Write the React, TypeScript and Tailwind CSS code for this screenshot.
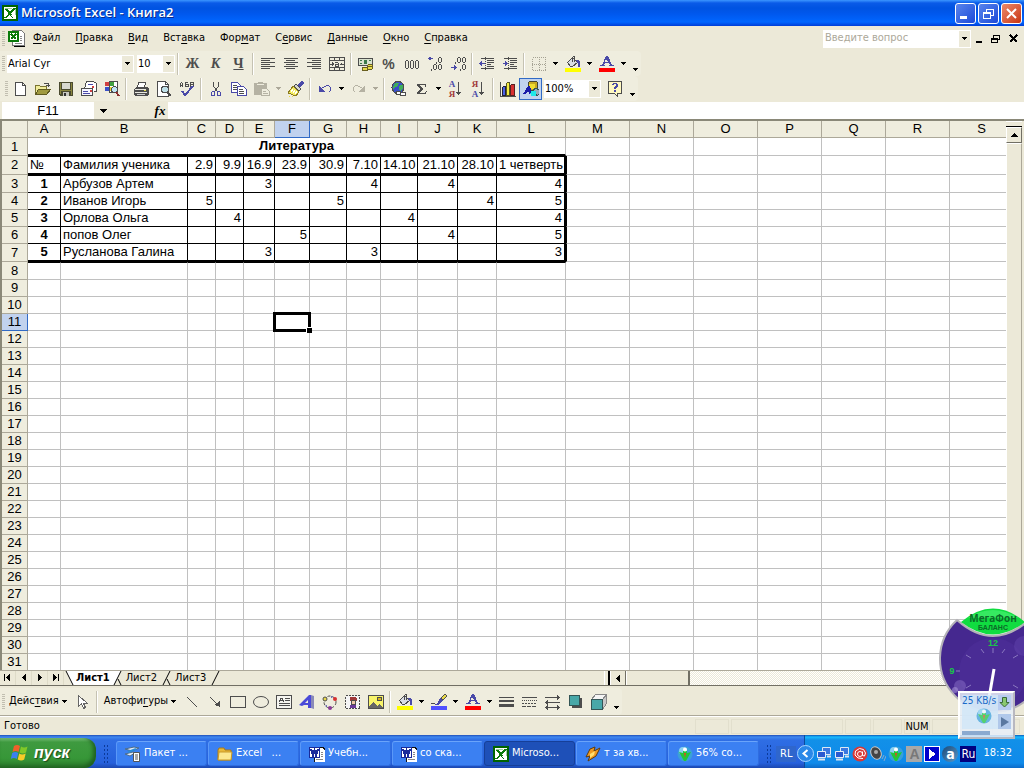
import { Fragment, type ReactNode } from "react";

const INK = "#4d4d4d";
const BLUE = "#4a4aa8";

/* ---------- icons ---------- */

const Pic = ({ children, w = 16, h = 16, smooth = false }: { children: ReactNode; w?: number; h?: number; smooth?: boolean }) => (
  <svg width={w} height={h} viewBox={`0 0 ${w} ${h}`} fill="none" shapeRendering={smooth ? "auto" : "crispEdges"} className="shrink-0" aria-hidden="true">
    {children}
  </svg>
);

const ExcelIcon = () => (
  <Pic>
    <path d="M0 0h16v16H0z" fill="#006400" />
    <path d="M2 2h12v12H2z" fill="#fff" />
    <path d="M3 3h7v1H3zM11 4h3v6h-1V5h-2z" fill="#9fd09f" />
    <path d="M3 4h3l2 3 3-4h3l-5 5 4 5h-3l-3-3-3 3H2l4-5z" fill="#0a7a0a" />
    <path d="M9 10l4 3M3 12l3-3" stroke="#fff" />
  </Pic>
);

const ExcelDocIcon = () => (
  <Pic w={17} h={17}>
    <path d="M5 1h9l3 3v13H6z" fill="#000" />
    <path d="M4 0h9l3 3v12H4z" fill="#fff" stroke="#777" />
    <path d="M12 6h2M12 8h2M12 10h2M7 13h7" stroke="#888" />
    <path d="M0 1h11v11H0z" fill="#0a7a0a" />
    <path d="M2 3h7v7H2z" fill="#fff" />
    <path d="M3 4l5 5M8 4L3 9" stroke="#0a7a0a" strokeWidth="2" />
  </Pic>
);

const AlignIcon = ({ mode }: { mode: "left" | "center" | "right" }) => (
  <Pic>
    {[2, 4, 6, 8, 10, 12].map((y, i) => {
      const w = i % 2 ? 9 : 14;
      const x = mode === "left" ? 1 : mode === "right" ? 15 - w : 1 + Math.floor((14 - w) / 2);
      return <rect key={y} x={x} y={y} width={w} height="1" fill={INK} />;
    })}
  </Pic>
);

const MergeIcon = () => (
  <Pic>
    <path d="M.5 1.500h15v13H.5zM.5 4.500h15M.5 11.500h15M5.500 1v3M10.500 1v3M5.500 12v3M10.500 12v3M1 8h4M11 8h4" stroke={INK} />
    <path d="M3 6v4l2-2zM13 6v4l-2-2z" fill={INK} />
    <path d="M6 6h3v1h1v4H6V8h3V7H6z" fill={INK} />
    <path d="M7 9h2v1H7z" fill="#efedde" />
  </Pic>
);

const MoneyIcon = () => (
  <Pic>
    <path d="M.5 2.500h14v7H.5z" fill="#d9e2cf" stroke={INK} />
    <path d="M2 4h2v1H2zM11 4h2v1h-2zM2 7h2v1H2zM6 4h3v4H6z" fill="#3c7a4a" />
    <ellipse cx="12" cy="10" rx="2.500" ry="1.500" fill="#e6dc4a" stroke="#6a6020" />
    <ellipse cx="12" cy="12" rx="2.500" ry="1.500" fill="#e6dc4a" stroke="#6a6020" />
    <ellipse cx="7" cy="13" rx="3" ry="1.500" fill="#e6dc4a" stroke="#6a6020" />
  </Pic>
);

const Zero = ({ x, y, h }: { x: number; y: number; h: number }) => (
  <path d={`M${x + 1} ${y}h2v1h-2zM${x + 1} ${y + h - 1}h2v1h-2zM${x} ${y + 1}h1v${h - 2}h-1zM${x + 3} ${y + 1}h1v${h - 2}h-1z`} fill={INK} />
);

const ThousandsIcon = () => (
  <Pic>
    <Zero x={1} y={4} h={9} />
    <Zero x={6} y={4} h={9} />
    <Zero x={11} y={4} h={9} />
  </Pic>
);

const MoreDecimalsIcon = () => (
  <Pic>
    <path d="M3 1h1v1h2v1H4v1H3V3H1V2h2z" fill={BLUE} />
    <path d="M1 2h1v1H1zM2 1h1v3H2z" fill={BLUE} />
    <Zero x={11} y={1} h={6} />
    <Zero x={6} y={8} h={6} />
    <Zero x={11} y={8} h={6} />
    <path d="M9 6h1v2H9zM4 13h1v2H4z" fill={INK} />
  </Pic>
);

const LessDecimalsIcon = () => (
  <Pic>
    <path d="M1 11h3v1H1zM4 9h1v5H4zM5 10h1v3H5zM6 11h1v1H6z" fill={BLUE} />
    <Zero x={7} y={1} h={6} />
    <Zero x={12} y={1} h={6} />
    <Zero x={12} y={8} h={6} />
    <path d="M5 6h1v2H5zM10 13h1v2h-1z" fill={INK} />
  </Pic>
);

const IndentIcon = ({ flip = false }: { flip?: boolean }) => (
  <Pic>
    <path d="M2 2.500h13M8 4.500h7M8 6.500h7M8 8.500h4M8 10.500h7M2 12.500h13" stroke={INK} />
    <path d={flip ? "M1 7h2v1H1zM3 5h1v5H3zM4 6h1v3H4zM5 7h1v1H5z" : "M3 7h3v1H3zM2 5h1v5H2zM1 6h1v3H1zM0 7h1v1H0z"} fill={BLUE} />
    <path d="M6.500 1v14" stroke={INK} strokeDasharray="1 1" />
  </Pic>
);

const BordersIcon = () => (
  <Pic>
    <path d="M1.500 1.500h13v13h-13zM8.500 1v14M1 8.500h14" stroke="#a5a293" strokeDasharray="1 1" />
  </Pic>
);

const BucketIcon = () => (
  <Pic>
    <path d="M2.500 6.500l5-5 5 5-5 4h-2z" fill="#d8dce4" stroke={INK} />
    <path d="M7.500 6V1.500l1-1h1v5" stroke={INK} />
    <path d="M11 4h3l1 2v5h-2V8z" fill={BLUE} />
    <path d="M0 12h16v4H0z" fill="#ff0" />
  </Pic>
);

const LetterColorIcon = () => (
  <Pic>
    <path d="M7 0h2l4 9h2v1h-5V9h1l-1-2H6L5 9h1v1H1V9h2zM7 3L6 6h3z" fill={BLUE} fillRule="evenodd" />
    <path d="M0 12h16v4H0z" fill="#f00" />
  </Pic>
);

const PenColorIcon = () => (
  <Pic>
    <path d="M14 0l2 2-4 4-2-2z" fill="#e8d84a" stroke={INK} />
    <path d="M9 4l3 3-5 4H4l-1-1h3z" fill={BLUE} />
    <path d="M0 9.500h4" stroke={INK} />
    <path d="M0 12h16v4H0z" fill="#5050ff" />
  </Pic>
);

const NewIcon = () => (
  <Pic>
    <path d="M3.500 1.500h7l3 3v10h-10z" fill="#fff" stroke={INK} />
    <path d="M10.500 1.500v3h3" stroke={INK} />
  </Pic>
);

const OpenIcon = () => (
  <Pic>
    <path d="M.5 13.500v-9h4l1 1h6v3" fill="#f0ec9a" stroke="#7a7430" />
    <path d="M.5 13.500l3-5h12l-4 5z" fill="#a09a40" stroke="#5f5a20" />
    <path d="M9 2.500h4v2M11 4.500h4M13 5.500h1" stroke={INK} />
  </Pic>
);

const SaveIcon = () => (
  <Pic>
    <path d="M1 1h14v14H2l-1-1z" fill="#4a4a30" />
    <path d="M2 2h1v11H2zM13 2h1v12h-1z" fill="#8a8640" />
    <path d="M4 2h8v6H4z" fill="#d8d8d0" />
    <path d="M3 9h10v1H3z" fill="#8a8640" />
    <path d="M5 11h6v4H5z" fill="#c8c8c0" />
    <path d="M6 12h2v3H6z" fill="#333" />
  </Pic>
);

const MailIcon = () => (
  <Pic>
    <path d="M3.500 8l2-7.500h7l3 2v8h-3" fill="#fff" stroke={INK} />
    <path d="M.5 7.500h11v7H.5z" fill="#f5f5ff" stroke={INK} />
    <path d="M2 10.500h5M2 12.500h7M7 3.500h5" stroke={BLUE} />
    <path d="M9 9h2v2H9zM11 5h2v2h-2z" fill="#d04040" />
  </Pic>
);

const FindFileIcon = () => (
  <Pic>
    <path d="M5.500.5h8v11h-8z" fill="#fff" stroke={INK} />
    <path d="M1 1h4v4H1z" fill="#d04040" />
    <path d="M6 1h4v4H6z" fill="#40a040" />
    <path d="M1 6h4v4H1z" fill="#3a50c8" />
    <path d="M6 6h3v4H6z" fill="#e8d030" />
    <circle cx="10.500" cy="8.500" r="3" fill="#bfe4f4" stroke={INK} />
    <path d="M12 11l3 4" stroke="#8a3030" strokeWidth="2" />
  </Pic>
);

const PrintIcon = () => (
  <Pic>
    <path d="M4.500 6.500l1-5h7l-1 5" fill="#fff" stroke={INK} />
    <path d="M1 8l2-2h11l2 2v5l-2 2H2l-1-2z" fill={INK} />
    <path d="M2 8h11v1H2zM2 11h12v1H2z" fill="#e8e8e0" />
    <path d="M11 9h2v1h-2z" fill="#e6dc4a" />
    <path d="M4 13h8v1H4z" fill="#ccc" />
  </Pic>
);

const PreviewIcon = () => (
  <Pic>
    <path d="M1.500.5h8l3 3v12h-11z" fill="#fff" stroke={INK} />
    <path d="M9.500.5v3h3" stroke={INK} />
    <circle cx="9" cy="8.500" r="3.500" fill="#bfe0e8" stroke={INK} />
    <path d="M11 11l4 4" stroke={INK} strokeWidth="2" />
  </Pic>
);

const SpellIcon = () => (
  <Pic>
    <path d="M1.500 6V2.500l1-1 1 1V6M1.500 4.500h2M6.500 1v5M6 1.500h3M6 3.500h3v2H6M11.500 1v5M11 1.500h3v2h-3M11 5.500h3v-2" stroke={INK} />
    <path d="M3 10l3 4 8-9" stroke={BLUE} strokeWidth="2" />
  </Pic>
);

const CutIcon = () => (
  <Pic>
    <path d="M5.500 1v4l4 6M10.500 1v4l-4 6" stroke={INK} />
    <path d="M4.500 10.500h2v4h-3v-3zM9.500 10.500h2l1 1v3h-3z" stroke={BLUE} />
  </Pic>
);

const CopyIcon = () => (
  <Pic>
    <path d="M.5 1.500h6l3 3v7h-9z" fill="#fff" stroke={BLUE} />
    <path d="M2 4.500h4M2 6.500h4M2 8.500h4" stroke={INK} />
    <path d="M6.500 5.500h6l3 3v6h-9z" fill="#fff" stroke={BLUE} />
    <path d="M8 8.500h4M8 10.500h5M8 12.500h5" stroke={INK} />
  </Pic>
);

const PasteIcon = () => (
  <Pic>
    <path d="M0 2h4V1h5v1h4v5H7v7H0z" fill="#b5b2a3" />
    <path d="M3 3h7v1H3z" fill="#efedde" />
    <path d="M7.500 7.500h5l3 3v4h-8z" fill="#efedde" stroke="#b5b2a3" />
    <path d="M9 10.500h3M9 12.500h5" stroke="#b5b2a3" />
  </Pic>
);

const BrushIcon = () => (
  <Pic>
    <path d="M14 0l2 2-4 5-3-3z" fill={BLUE} />
    <path d="M8 3l5 5-2 2-5-5z" fill="#d8d8d0" stroke={INK} />
    <path d="M5 5l6 6-3 4-8-3z" fill="#f4ec60" stroke="#8a7a20" />
    <path d="M3 11l2-3M5 12l2-3M7 13l2-3" stroke="#fff" />
    <path d="M1 15h1M4 15h1" stroke="#e8d84a" />
  </Pic>
);

const UndoIcon = ({ redo = false }: { redo?: boolean }) => (
  <Pic>
    <g transform={redo ? "translate(16 0) scale(-1 1)" : undefined} fill={redo ? "#b5b2a3" : BLUE}>
      <path d="M2 5h1v1h1v1h1v1h1v1h1v1h1v1H2z" />
      <path d="M5 6h2v1H5zM7 5h2v1H7zM9 4h3v1H9zM12 5h1v1h-1zM13 6h1v4h-1zM12 10h1v1h-1z" />
    </g>
  </Pic>
);

const GlobeLinkIcon = () => (
  <Pic>
    <circle cx="7" cy="6.500" r="6" fill="#3a50c8" stroke={INK} />
    <path d="M4 2h4l-1 3-3 1-1 3-1-3zM9 4h3v4l-3 2-1-3z" fill="#3fae5a" />
    <path d="M5.500 10.500h4v3h-4zM9.500 11.500h5v3h-5z" fill="#fff" stroke={INK} />
  </Pic>
);

const SortIcon = ({ top, bottom }: { top: string; bottom: string }) => (
  <span className="flex items-center">
    <span className="flex flex-col font-['Liberation_Serif',serif] text-[9px] leading-[10px] font-bold">
      <span className={top === "А" ? "text-[#4a4aa8]" : "text-[#a03838]"}>{top}</span>
      <span className={bottom === "А" ? "text-[#4a4aa8]" : "text-[#a03838]"}>{bottom}</span>
    </span>
    <Pic w={7}>
      <path d="M3 1h1v13H3zM1 11h5v1H1zM2 12h3v1H2z" fill={INK} />
    </Pic>
  </span>
);

const ChartIcon = () => (
  <Pic>
    <path d="M.5 1v14H16" stroke={INK} />
    <path d="M2.500 6.500l1-1h2v9h-3z" fill="#4a60e8" stroke="#223" />
    <path d="M6.500 2.500l1-1h2v13h-3z" fill="#f4ec40" stroke="#552" />
    <path d="M10.500 4.500l1-1h3v11h-4z" fill="#d83030" stroke="#522" />
  </Pic>
);

const DrawingIcon = () => (
  <Pic>
    <path d="M5.500 1.500l1-1h7l1 1v6l-2 2h-7z" fill="#c8a820" stroke="#443" />
    <path d="M6 3h6v5H6z" fill="#f0dc30" />
    <path d="M0 13L5 5h2l2 8H6v-2H4l-2 2z" fill="#1a1aa8" />
    <path d="M10 9l3-2 3 2v4l-2 2z" fill="#9ab" stroke="#355" />
    <circle cx="10.500" cy="12.500" r="3" fill="#20e8e8" />
  </Pic>
);

const HelpIcon = () => (
  <Pic>
    <path d="M1.500.5h13v12h-4v3l-3-3h-6z" fill="#fff8c0" stroke={INK} />
    <path d="M5 4V3h1V2h4v1h1v3h-1v1H9v1H7V6h1V5h1V3H7v1zM7 9h2v2H7z" fill={BLUE} />
  </Pic>
);

const PointerIcon = () => (
  <Pic>
    <path d="M4.500 1.500v11l3-3 2 5 2-1-2-4h4z" fill="#fff" stroke="#666" />
  </Pic>
);

const TextBoxIcon = () => (
  <Pic>
    <path d="M.5 1.500h15v13H.5z" fill="#f5f5f0" stroke={INK} />
    <path d="M3 8l2-4h1l2 4M4 6.500h3M9 4.500h5M9 6.500h5M3 9.500h11M3 11.500h11" stroke={INK} />
  </Pic>
);

const WordArtIcon = () => (
  <Pic smooth>
    <path d="M0 11L10 1h2v13H9v-3H5l-2 1z" fill="#4a4ad8" />
    <path d="M6 9l3-3v3z" fill="#efedde" />
    <path d="M12 1l3 1v13l-3-1z" fill="#8a8ab8" />
  </Pic>
);

const DiagramIcon = () => (
  <Pic smooth>
    <circle cx="8" cy="8" r="6" stroke={INK} strokeDasharray="3 2" />
    <circle cx="3" cy="5" r="2" fill="#e8d84a" stroke={INK} />
    <circle cx="13" cy="5" r="2" fill="#d83030" />
    <circle cx="8" cy="14" r="2" fill="#8a3a98" />
    <path d="M3 12l2-1v2z" fill={BLUE} />
    <path d="M9 2l2 1-2 1z" fill={BLUE} />
  </Pic>
);

const ClipArtIcon = () => (
  <Pic>
    <path d="M.5 1.500h14v13H.5z" fill="#f5f5f5" stroke={INK} strokeDasharray="2 1" />
    <path d="M5 3h5l2 2v2H5z" fill="#a03838" />
    <path d="M6 6h4v4H6z" fill="#f0c8a8" stroke={INK} />
    <path d="M5 11h6v3H5z" fill="#6a3a98" />
  </Pic>
);

const PhotoIcon = () => (
  <Pic>
    <path d="M.5 1.500h15v13H.5z" fill="#f8f46a" stroke={INK} />
    <circle cx="11.500" cy="5" r="2" fill="#d8b820" stroke={INK} />
    <path d="M1 14v-2l4-4 4 4 2-2 4 3v1z" fill="#666" />
  </Pic>
);

const LineWeightIcon = () => (
  <Pic>
    <path d="M0 3h15v1H0zM0 6h15v2H0zM0 10h15v3H0z" fill={INK} />
  </Pic>
);

const DashIcon = () => (
  <Pic>
    <path d="M0 3.500h15" stroke={INK} />
    <path d="M0 6.500h15" stroke={INK} strokeDasharray="1 1" />
    <path d="M0 9.500h15" stroke={INK} strokeDasharray="2 1" />
    <path d="M0 12.500h15" stroke={INK} strokeDasharray="4 1" />
  </Pic>
);

const ArrowStyleIcon = () => (
  <Pic>
    <path d="M0 3h15v1H0zM12 1h1v5h-1zM13 2h1v3h-1zM0 8h15v1H0zM2 6h1v5H2zM1 7h1v3H1zM0 13h15v1H0zM2 11h1v5H2zM1 12h1v3H1zM12 11h1v5h-1zM13 12h1v3h-1z" fill={INK} />
  </Pic>
);

const ShadowIcon = () => (
  <Pic>
    <path d="M4 4h10v10H4z" fill={INK} />
    <path d="M1.500 1.500h10v10h-10z" fill="#48a8a8" stroke="#355" />
  </Pic>
);

const CubeIcon = () => (
  <Pic>
    <path d="M.5 5.500l4-5h11l-4 5z" fill="#f4f4f4" stroke="#888" />
    <path d="M11.500 5.500l4-5v9l-4 6z" fill="#c8c8c8" stroke="#888" />
    <path d="M.5 5.500h11v10H.5z" fill="#48a8a8" stroke="#355" />
  </Pic>
);

const WordIcon = () => (
  <Pic>
    <path d="M5 1h9l2 3v12H5z" fill="#fff" stroke="#111" />
    <path d="M12 6h2M12 8h2M12 10h2M7 13h7" stroke="#888" />
    <path d="M0 1h11v11H0z" fill="#1a2a9a" />
    <path d="M1 2h9v9H1z" fill="#fff" />
    <path d="M2 3l2 6 1.500-5L7 9l2-6" stroke="#1a2a9a" strokeWidth="2" />
  </Pic>
);

const FolderIcon = () => (
  <Pic smooth>
    <path d="M1 4l1-2h5l1 2h6v10H1z" fill="#e8b838" stroke="#a87818" />
    <path d="M1 14l1-8h13l-1 8z" fill="#fce890" stroke="#c89828" />
  </Pic>
);

const PackIcon = () => (
  <Pic smooth>
    <path d="M0 3l9-2 5 1-7 3zM0 8l8-2 2 1-5 3z" fill="#e4ecf4" stroke="#4a6a8a" />
    <path d="M3 6l8-3" stroke="#2a8ad8" strokeWidth="2" />
    <path d="M8.500 6.500h6v9h-6z" fill="#fff" stroke="#555" />
    <path d="M10 9h3M10 11h3M10 13h3" stroke="#555" />
  </Pic>
);

const BoltIcon = () => (
  <Pic smooth>
    <path d="M1 11L5 3l5-2-1 4 6-3-4 8-8 5 2-5z" fill="#f09a20" stroke="#5a3a10" />
    <path d="M5 8l5-3-1 4-4 3z" fill="#ffe070" />
  </Pic>
);

const DownloaderIcon = () => (
  <Pic smooth>
    <circle cx="8" cy="8" r="7.500" fill="#3aa0d8" />
    <circle cx="6" cy="5" r="4" fill="#8ad0f0" />
    <path d="M2 6l4 1V5h4v2l4-1-5 9H7z" fill="#20c838" />
    <circle cx="8" cy="3.500" r="2" fill="#fff" />
    <path d="M7 7h2l-1 5z" fill="#e84020" />
  </Pic>
);

const NetworkIcon = () => (
  <Pic smooth>
    <path d="M6.500 1.500h8v7h-8z" fill="#3a78e0" stroke="#dde8f4" />
    <path d="M1.500 5.500h8v6h-8z" fill="#2a5ad0" stroke="#e4eef8" />
    <path d="M2 13.500h7M11 10.500h4" stroke="#dde4ee" strokeWidth="2" />
  </Pic>
);

const AgentIcon = () => (
  <Pic smooth>
    <circle cx="8" cy="8" r="7.500" fill="#d83838" />
    <circle cx="8" cy="8" r="2.500" stroke="#fff" />
    <path d="M10.500 5.500v4l2 .5 1-3-2-3.500-4-1-4 2.500-.5 4 3 3 5 .5" stroke="#fff" />
  </Pic>
);

const VolumeIcon = () => (
  <Pic smooth>
    <ellipse cx="6" cy="7" rx="5" ry="6.500" transform="rotate(-25 6 7)" fill="#444" stroke="#ccc" />
    <circle cx="6" cy="6" r="2" fill="#aaa" />
    <path d="M12 13l2-4M14 15l2-5" stroke="#8ac" />
  </Pic>
);

const LetterTrayIcon = () => (
  <span className="flex h-4 w-4 items-center justify-center bg-[#a8a8a8] font-['Liberation_Sans',sans-serif] text-sm leading-4 font-bold text-[#787878]">A</span>
);

const PlayTrayIcon = () => (
  <Pic>
    <path d="M0 0h16v16H0z" fill="#fff" />
    <path d="M1 1h14v14H1z" fill="#00c" />
    <path d="M5 3l7 5-7 5z" fill="#fff" />
  </Pic>
);

const WindowsFlag = () => (
  <svg width="20" height="20" viewBox="0 0 20 20" aria-hidden="true">
    <path d="M4 3q3-2 6 0L8.500 9q-3-2-6 0z" fill="#f0602a" />
    <path d="M11 3.500q3 2 6.500 0L16 9.500q-3 2-6.500 0z" fill="#80c828" />
    <path d="M2.200 10q3-2 6 0L6.800 16q-3-2-6 0z" fill="#3a80f0" />
    <path d="M9.200 10.500q3 2 6.500 0l-1.500 6q-3 2-6.500 0z" fill="#f8cc28" />
  </svg>
);

/* ---------- small building blocks ---------- */

const Caret = ({ faded = false }: { faded?: boolean }) => (
  <Pic w={5} h={3}>
    <path d="M0 0h5v1H4v1H3v1H2V2H1V1H0z" fill={faded ? "#aca899" : "#000"} />
  </Pic>
);

const ToolButton = ({ label, pressed = false, children }: { label: string; pressed?: boolean; children: ReactNode }) => (
  <button
    type="button"
    aria-label={label}
    title={label}
    className={`flex h-[22px] w-[23px] shrink-0 items-center justify-center ${pressed ? "border border-[#316ac5] bg-[#c1d2ee]" : ""}`}
  >
    {children}
  </button>
);

const ArrowButton = ({ label, faded }: { label: string; faded?: boolean }) => (
  <button type="button" aria-label={label} className="flex h-[22px] w-[11px] shrink-0 items-center justify-center">
    <Caret faded={faded} />
  </button>
);

const MoreButton = () => (
  <button type="button" aria-label="Параметры панелей" className="flex h-[22px] w-3 shrink-0 items-end justify-center pb-1">
    <Caret />
  </button>
);

const Sep = () => <span className="mx-[2px] h-[22px] w-[2px] shrink-0 border-r border-white bg-[#c5c2b2]" />;

const Grip = () => (
  <span className="h-4 w-[3px] shrink-0 bg-[repeating-linear-gradient(#c1beb0_0_1px,transparent_1px_2px)]" />
);

const Accel = ({ text, at }: { text: string; at: number }) => (
  <>
    {text.slice(0, at)}
    <span className="underline underline-offset-2">{text[at]}</span>
    {text.slice(at + 1)}
  </>
);

const Combo = ({ label, value, width }: { label: string; value: string; width: string }) => (
  <label className={`flex h-[18px] shrink-0 items-center border border-white bg-white ${width}`}>
    <select aria-label={label} className="h-4 min-w-0 flex-1 appearance-none bg-white leading-4 outline-none">
      <option>{value}</option>
    </select>
    <span className="flex h-4 w-[11px] items-center justify-center bg-[#ece9d8]">
      <Caret />
    </span>
  </label>
);

/* ---------- window chrome ---------- */

const TitleBar = () => (
  <header className="flex h-[26px] shrink-0 items-center bg-[linear-gradient(#3c96ff_0,#0a5be8_3px,#0053e1_8px,#0058ee_14px,#0066ff_22px,#003dd7_26px)] pr-[2px] pl-[2px]">
    <ExcelIcon />
    <h1 className="flex-1 pl-[3px] font-['Open_Sans','Trebuchet_MS',sans-serif] text-[13px] font-semibold text-white [text-shadow:1px_1px_0_#0a2a88]">
      Microsoft Excel - Книга2
    </h1>
    <div className="flex gap-[2px]">
      <button type="button" aria-label="Свернуть" className="h-[21px] w-[21px] rounded-[3px] border border-white bg-linear-to-br from-[#5a84ec] to-[#1c48d8]">
        <Pic w={19} h={19}>
          <path d="M4 12h7v3H4z" fill="#fff" />
        </Pic>
      </button>
      <button type="button" aria-label="Восстановить" className="h-[21px] w-[21px] rounded-[3px] border border-white bg-linear-to-br from-[#5a84ec] to-[#1c48d8]">
        <Pic w={19} h={19}>
          <path d="M7.500 8V5.500h7v6H12M7 5h8M4.500 8.500h7v6h-7zM4 9h8" stroke="#fff" />
        </Pic>
      </button>
      <button type="button" aria-label="Закрыть" className="h-[21px] w-[21px] rounded-[3px] border border-white bg-linear-to-br from-[#ec8868] to-[#c83208]">
        <Pic w={19} h={19} smooth>
          <path d="M5 5l9 9M14 5l-9 9" stroke="#fff" strokeWidth="2" />
        </Pic>
      </button>
    </div>
  </header>
);

const menuItems = [
  { text: "Файл", at: 0 },
  { text: "Правка", at: 0 },
  { text: "Вид", at: 0 },
  { text: "Вставка", at: 3 },
  { text: "Формат", at: 3 },
  { text: "Сервис", at: 1 },
  { text: "Данные", at: 0 },
  { text: "Окно", at: 0 },
  { text: "Справка", at: 0 },
];

const MenuBar = () => (
  <nav className="flex h-[25px] shrink-0 items-center pl-[2px]">
    <Grip />
    <span className="ml-[3px]">
      <ExcelDocIcon />
    </span>
    {menuItems.map((item) => (
      <button key={item.text} type="button" className="pr-[7px] pl-2">
        <Accel {...item} />
      </button>
    ))}
    <div className="ml-auto flex h-[18px] w-[148px] items-center bg-white pr-px">
      <input aria-label="Введите вопрос" placeholder="Введите вопрос" className="min-w-0 flex-1 bg-white pl-[2px] outline-none placeholder:text-[#aca899]" />
      <button type="button" aria-label="Список вопросов" className="flex h-4 w-[11px] items-center justify-center bg-[#ece9d8]">
        <Caret />
      </button>
    </div>
    <div className="flex items-center gap-[5px] pr-1">
      <button type="button" aria-label="Свернуть книгу">
        <Pic w={13} h={12}>
          <path d="M5 8h6v2H5z" fill="#000" />
        </Pic>
      </button>
      <button type="button" aria-label="Восстановить книгу">
        <Pic w={13} h={12}>
          <path d="M4.500 5V2.500h6v4H9M4 2h7M2.500 5.500h6v4h-6zM2 6h7" stroke="#000" />
        </Pic>
      </button>
      <button type="button" aria-label="Закрыть книгу">
        <Pic w={13} h={12}>
          <path d="M3 2l7 7M10 2L3 9" stroke="#000" strokeWidth="2" />
        </Pic>
      </button>
    </div>
  </nav>
);

const FormatBar = () => (
  <div role="toolbar" aria-label="Форматирование" className="flex h-[25px] w-fit shrink-0 items-center rounded-r-sm bg-[#efedde] pl-[2px]">
    <Grip />
    <span className="ml-[2px] mr-[3px]">
      <Combo label="Шрифт" value="Arial Cyr" width="w-[127px]" />
    </span>
    <Combo label="Размер" value="10" width="w-[38px]" />
    <Sep />
    <ToolButton label="Полужирный">
      <b className="font-['Liberation_Serif',serif] text-sm text-[#4d4d4d]">Ж</b>
    </ToolButton>
    <ToolButton label="Курсив">
      <b className="font-['Liberation_Serif',serif] text-sm text-[#4d4d4d] italic">К</b>
    </ToolButton>
    <ToolButton label="Подчеркнутый">
      <b className="font-['Liberation_Serif',serif] text-sm text-[#4d4d4d] underline">Ч</b>
    </ToolButton>
    <Sep />
    <ToolButton label="По левому краю"><AlignIcon mode="left" /></ToolButton>
    <ToolButton label="По центру"><AlignIcon mode="center" /></ToolButton>
    <ToolButton label="По правому краю"><AlignIcon mode="right" /></ToolButton>
    <ToolButton label="Объединить и поместить в центре"><MergeIcon /></ToolButton>
    <Sep />
    <ToolButton label="Денежный формат"><MoneyIcon /></ToolButton>
    <ToolButton label="Процентный формат">
      <b className="font-['Liberation_Sans',sans-serif] text-sm text-[#4d4d4d]">%</b>
    </ToolButton>
    <ToolButton label="Формат с разделителями"><ThousandsIcon /></ToolButton>
    <ToolButton label="Увеличить разрядность"><MoreDecimalsIcon /></ToolButton>
    <ToolButton label="Уменьшить разрядность"><LessDecimalsIcon /></ToolButton>
    <Sep />
    <ToolButton label="Уменьшить отступ"><IndentIcon /></ToolButton>
    <ToolButton label="Увеличить отступ"><IndentIcon flip /></ToolButton>
    <Sep />
    <ToolButton label="Границы"><BordersIcon /></ToolButton>
    <ArrowButton label="Выбор границ" />
    <ToolButton label="Цвет заливки"><BucketIcon /></ToolButton>
    <ArrowButton label="Выбор цвета заливки" />
    <ToolButton label="Цвет шрифта"><LetterColorIcon /></ToolButton>
    <ArrowButton label="Выбор цвета шрифта" />
    <MoreButton />
  </div>
);

const StandardBar = () => (
  <div role="toolbar" aria-label="Стандартная" className="flex h-[25px] w-fit shrink-0 items-center rounded-r-sm bg-[#efedde] pl-[5px]">
    <Grip />
    <ToolButton label="Создать"><NewIcon /></ToolButton>
    <ToolButton label="Открыть"><OpenIcon /></ToolButton>
    <ToolButton label="Сохранить"><SaveIcon /></ToolButton>
    <ToolButton label="Сообщение"><MailIcon /></ToolButton>
    <ToolButton label="Найти"><FindFileIcon /></ToolButton>
    <Sep />
    <ToolButton label="Печать"><PrintIcon /></ToolButton>
    <ToolButton label="Предварительный просмотр"><PreviewIcon /></ToolButton>
    <ToolButton label="Орфография"><SpellIcon /></ToolButton>
    <Sep />
    <ToolButton label="Вырезать"><CutIcon /></ToolButton>
    <ToolButton label="Копировать"><CopyIcon /></ToolButton>
    <ToolButton label="Вставить"><PasteIcon /></ToolButton>
    <ArrowButton label="Варианты вставки" faded />
    <ToolButton label="Формат по образцу"><BrushIcon /></ToolButton>
    <Sep />
    <ToolButton label="Отменить"><UndoIcon /></ToolButton>
    <ArrowButton label="Список отмены" />
    <ToolButton label="Вернуть"><UndoIcon redo /></ToolButton>
    <ArrowButton label="Список возврата" faded />
    <Sep />
    <ToolButton label="Гиперссылка"><GlobeLinkIcon /></ToolButton>
    <ToolButton label="Автосумма">
      <Pic>
        <path d="M3 3h9v3h-1V5l-1-1H6l3 4-3 4h5l1-2h1l-1 3H3v-1l3-4-3-4z" fill={INK} />
      </Pic>
    </ToolButton>
    <ArrowButton label="Функции" />
    <ToolButton label="По возрастанию"><SortIcon top="А" bottom="Я" /></ToolButton>
    <ToolButton label="По убыванию"><SortIcon top="Я" bottom="А" /></ToolButton>
    <Sep />
    <ToolButton label="Мастер диаграмм"><ChartIcon /></ToolButton>
    <ToolButton label="Рисование" pressed><DrawingIcon /></ToolButton>
    <span className="px-[2px]">
      <Combo label="Масштаб" value="100%" width="w-[57px]" />
    </span>
    <ToolButton label="Справка"><HelpIcon /></ToolButton>
    <MoreButton />
  </div>
);

const FormulaBar = () => (
  <div className="mt-px flex h-[17px] shrink-0 items-stretch pl-[2px]">
    <input aria-label="Имя" defaultValue="F11" className="w-[92px] bg-white text-center font-['Liberation_Sans',sans-serif] text-[13px] outline-none" />
    <button type="button" aria-label="Список имён" className="flex w-[18px] items-center justify-center">
      <Pic w={7} h={4}>
        <path d="M0 0h7v1H6v1H5v1H4v1H3V3H2V2H1V1H0z" fill="#000" />
      </Pic>
    </button>
    <button type="button" aria-label="Вставка функции" className="ml-9 w-5 pl-1 text-center font-['Liberation_Serif',serif] text-[13px] leading-4 font-bold italic">
      fx
    </button>
    <input aria-label="Строка формул" className="min-w-0 flex-1 bg-white px-1 outline-none" />
  </div>
);

/* ---------- worksheet ---------- */

const columns = [
  { name: "A", width: 33 },
  { name: "B", width: 127 },
  { name: "C", width: 28 },
  { name: "D", width: 28 },
  { name: "E", width: 31 },
  { name: "F", width: 35 },
  { name: "G", width: 37 },
  { name: "H", width: 34 },
  { name: "I", width: 37 },
  { name: "J", width: 40 },
  { name: "K", width: 39 },
  { name: "L", width: 69 },
  ..."MNOPQRS".split("").map((name) => ({ name, width: 64 })),
];

const tableWidth = 26 + columns.reduce((sum, c) => sum + c.width, 0);

const cells: Record<number, string[]> = {
  2: ["№", "Фамилия ученика", "2.9", "9.9", "16.9", "23.9", "30.9", "7.10", "14.10", "21.10", "28.10", "1 четверть"],
  3: ["1", "Арбузов Артем", "", "", "3", "", "", "4", "", "4", "", "4"],
  4: ["2", "Иванов Игорь", "5", "", "", "", "5", "", "", "", "4", "5"],
  5: ["3", "Орлова Ольга", "", "4", "", "", "", "", "4", "", "", "4"],
  6: ["4", "попов Олег", "", "", "", "5", "", "", "", "4", "", "5"],
  7: ["5", "Русланова Галина", "", "", "3", "", "", "3", "", "", "", "3"],
};

const rowHeight = (row: number) => {
  if (row === 2) return "h-[19px]";
  if (row === 1 || row === 3 || row === 7 || row === 8) return "h-[18px]";
  return "h-[17px]";
};

const cellClass = (row: number, col: number) => {
  const inTable = row >= 2 && row <= 7 && col < 12;
  const list = ["p-0 leading-[14px] whitespace-nowrap"];
  if (!inTable) {
    list.push("border-r border-b border-r-[#c0c0c0] border-b-[#c0c0c0]");
    if (row === 8 && col < 12) list.push("border-t border-t-black");
    if (row >= 2 && row <= 7 && col === 12) list.push("border-l border-l-black");
    return list.join(" ");
  }
  list.push("border-black px-[2px]");
  list.push(col === 11 ? "border-r-2" : "border-r");
  list.push(row === 2 || row === 7 ? "border-b-2" : "border-b");
  if (row === 2 || row === 3) list.push("border-t");
  if (col === 0 && row > 2) list.push("text-center font-bold");
  else if (col > 1) list.push("text-right");
  return list.join(" ");
};

const SelectionFrame = () => (
  <span className="absolute -inset-[2px] z-10 border-3 border-black">
    <span className="absolute -right-[4px] -bottom-[4px] h-[6px] w-[6px] border-t border-l border-white bg-black" />
  </span>
);

const Worksheet = () => (
  <div className="min-w-0 flex-1 overflow-hidden bg-white font-['Liberation_Sans',Arial,sans-serif] text-[13px]">
    <table className="table-fixed border-separate border-spacing-0" style={{ width: tableWidth }}>
      <colgroup>
        <col className="w-[26px]" />
        {columns.map((c) => (
          <col key={c.name} style={{ width: c.width }} />
        ))}
      </colgroup>
      <thead>
        <tr className="h-[17px] bg-[#efedde]">
          <th aria-label="Выделить всё" className="border-r border-b border-[#aca899] p-0" />
          {columns.map((c) => (
            <th
              key={c.name}
              className={`border-r border-b p-0 leading-4 font-normal ${c.name === "F" ? "border-[#316ac5] bg-[#c1d2ee]" : "border-[#aca899]"}`}
            >
              {c.name}
            </th>
          ))}
        </tr>
      </thead>
      <tbody>
        {Array.from({ length: 31 }, (_, i) => i + 1).map((row) => (
          <tr key={row} className={rowHeight(row)}>
            <th className={`border-r border-b p-0 leading-[14px] font-normal ${row === 11 ? "border-[#316ac5] bg-[#c1d2ee]" : "border-[#aca899] bg-[#efedde]"}`}>
              {row}
            </th>
            {row === 1 && (
              <td colSpan={12} className="border-r border-b-2 border-r-[#c0c0c0] border-b-black p-0 text-center leading-[14px] font-bold">
                Литература
              </td>
            )}
            {columns.map((c, col) =>
              row === 1 && col < 12 ? null : (
                <td key={c.name} className={row === 11 && c.name === "F" ? `relative ${cellClass(row, col)}` : cellClass(row, col)}>
                  {cells[row]?.[col]}
                  {row === 11 && c.name === "F" && <SelectionFrame />}
                </td>
              ),
            )}
          </tr>
        ))}
      </tbody>
    </table>
  </div>
);

const VerticalScroll = () => (
  <div className="flex w-[18px] shrink-0 flex-col border-r-2 border-[#ece9d8] bg-[#ece9d8]">
    <div className="h-[6px] shrink-0 border-t border-b border-t-white border-b-black" />
    <button type="button" aria-label="Прокрутить вверх" className="flex h-4 shrink-0 items-center justify-center border border-t-white border-r-[#716f64] border-b-[#716f64] border-l-white">
      <Pic w={7} h={4}>
        <path d="M3 0h1v1h1v1h1v1h1v1H0V3h1V2h1V1h1z" fill="#000" />
      </Pic>
    </button>
    <div className="flex-1 border border-t-white border-r-[#aca899] border-b-[#716f64] border-l-white" />
  </div>
);

const SheetTabs = () => (
  <div className="flex h-4 shrink-0 items-stretch border-t border-b border-t-[#aca899] border-b-[#716f64]">
    {[
      { label: "Первый лист", d: "M4 3h1v7H4zM9 3h1v7H9zM8 4h1v5H8zM7 5h1v3H7zM6 6h1v1H6z" },
      { label: "Предыдущий лист", d: "M9 3h1v7H9zM8 4h1v5H8zM7 5h1v3H7zM6 6h1v1H6z" },
      { label: "Следующий лист", d: "M6 3h1v7H6zM7 4h1v5H7zM8 5h1v3H8zM9 6h1v1H9z" },
      { label: "Последний лист", d: "M5 3h1v7H5zM6 4h1v5H6zM7 5h1v3H7zM8 6h1v1H8zM10 3h1v7h-1z" },
    ].map((nav) => (
      <button key={nav.label} type="button" aria-label={nav.label} className="flex w-[16px] items-center justify-center border-r border-[#dedbc8]">
        <Pic w={15} h={14}>
          <path d={nav.d} fill="#000" />
        </Pic>
      </button>
    ))}
    <div role="tablist" className="flex items-stretch leading-[14px]">
      <svg width="10" height="14" viewBox="0 0 10 14" aria-hidden="true">
        <path d="M2 0h8v14H8z" fill="#fff" />
        <path d="M2 0l7 14" stroke="#000" />
      </svg>
      <button type="button" role="tab" aria-selected="true" className="bg-white px-[2px] font-bold">
        Лист1
      </button>
      {["Лист2", "Лист3"].map((name, i) => (
        <Fragment key={name}>
          <svg width="10" height="14" viewBox="0 0 10 14" aria-hidden="true">
            {i === 0 && <path d="M0 0h9L2 14H0z" fill="#fff" />}
            <path d="M9 0L2 14M6 8l3 6" stroke="#000" fill="none" />
          </svg>
          <button type="button" role="tab" aria-selected="false" className="px-1">
            {name}
          </button>
        </Fragment>
      ))}
      <svg width="10" height="14" viewBox="0 0 10 14" aria-hidden="true">
        <path d="M9 0L2 14" stroke="#000" />
      </svg>
    </div>
    <div className="ml-auto flex w-[41%] items-stretch">
      <div className="w-[6px] border-r-2 border-l border-r-black border-l-white" />
      <button type="button" aria-label="Прокрутить влево" className="flex w-4 items-center justify-center border-r border-l border-r-[#716f64] border-l-white">
        <Pic w={4} h={7}>
          <path d="M0 3h1V2h1V1h1V0h1v7H3V6H2V5H1V4H0z" fill="#000" />
        </Pic>
      </button>
      <div className="w-[64px] border-r-2 border-l border-r-[#716f64] border-l-white" />
      <div className="flex-1 bg-[repeating-conic-gradient(#fff_0_25%,#ece9d8_0_50%)] bg-[length:2px_2px]" />
    </div>
  </div>
);

const DrawingBar = () => (
  <div className="mt-[2px] h-[28px] shrink-0 border-b border-[#aca899]">
    <div role="toolbar" aria-label="Рисование" className="flex h-[27px] w-fit items-center rounded-r-sm bg-[#efedde] pl-[2px]">
      <Grip />
      <button type="button" className="flex items-center gap-[3px] pr-1 pl-1">
        <span><Accel text="Действия" at={4} /></span>
        <Caret />
      </button>
      <ToolButton label="Выбор объектов"><PointerIcon /></ToolButton>
      <Sep />
      <button type="button" className="flex items-center gap-[3px] pr-1 pl-1">
        <span><Accel text="Автофигуры" at={6} /></span>
        <Caret />
      </button>
      <ToolButton label="Линия">
        <Pic><path d="M3 3l10 10" stroke={INK} /></Pic>
      </ToolButton>
      <ToolButton label="Стрелка">
        <Pic>
          <path d="M3 3l8 8" stroke={INK} />
          <path d="M13 13V7l-6 4z" fill={INK} />
        </Pic>
      </ToolButton>
      <ToolButton label="Прямоугольник">
        <Pic><path d="M.5 2.500h15v11H.5z" stroke={INK} /></Pic>
      </ToolButton>
      <ToolButton label="Овал">
        <Pic smooth><ellipse cx="8" cy="8" rx="7.500" ry="5.500" stroke={INK} /></Pic>
      </ToolButton>
      <ToolButton label="Надпись"><TextBoxIcon /></ToolButton>
      <ToolButton label="Объект WordArt"><WordArtIcon /></ToolButton>
      <ToolButton label="Диаграмма"><DiagramIcon /></ToolButton>
      <ToolButton label="Картинка"><ClipArtIcon /></ToolButton>
      <ToolButton label="Рисунок"><PhotoIcon /></ToolButton>
      <Sep />
      <ToolButton label="Заливка"><BucketIcon /></ToolButton>
      <ArrowButton label="Цвет заливки фигуры" />
      <ToolButton label="Цвет линий"><PenColorIcon /></ToolButton>
      <ArrowButton label="Выбор цвета линий" />
      <ToolButton label="Цвет текста"><LetterColorIcon /></ToolButton>
      <ArrowButton label="Выбор цвета текста" />
      <ToolButton label="Тип линии"><LineWeightIcon /></ToolButton>
      <ToolButton label="Тип штриха"><DashIcon /></ToolButton>
      <ToolButton label="Вид стрелки"><ArrowStyleIcon /></ToolButton>
      <ToolButton label="Тень"><ShadowIcon /></ToolButton>
      <ToolButton label="Объем"><CubeIcon /></ToolButton>
      <MoreButton />
    </div>
  </div>
);

const StatusBar = () => (
  <footer className="flex h-[19px] shrink-0 items-center border-t border-white pr-1 pl-1">
    <span className="flex-1">Готово</span>
    <div className="flex h-[15px] gap-[2px] leading-[13px] *:border *:border-[#e2dfcd]">
      <span className="w-[34px]" />
      <span className="w-[112px]" />
      <span className="w-[26px]" />
      <span className="w-[29px]" />
      <span className="w-[26px] text-center">NUM</span>
      <span className="w-[28px]" />
      <span className="w-[28px]" />
      <span className="w-[28px]" />
    </div>
  </footer>
);

/* ---------- taskbar ---------- */

const tasks: { title: string; icon: ReactNode; active?: boolean }[] = [
  { title: "Пакет ...", icon: <PackIcon /> },
  { title: "Excel   ...", icon: <FolderIcon /> },
  { title: "Учебн...", icon: <WordIcon /> },
  { title: "со ска...", icon: <WordIcon /> },
  { title: "Microso...", icon: <ExcelIcon />, active: true },
  { title: "т за хв...", icon: <BoltIcon /> },
  { title: "56% со...", icon: <DownloaderIcon /> },
];

const TaskGrip = () => (
  <span className="h-5 w-[6px] shrink-0 bg-[radial-gradient(#0c3a9a_1px,transparent_1px)] bg-[length:3px_4px]" />
);

const Taskbar = () => (
  <div className="flex h-[33px] shrink-0 items-stretch bg-[linear-gradient(#1f4fb8_0,#3f88f0_2px,#2f6ee4_5px,#2560dc_28px,#1c48b0_33px)] text-white">
    <button type="button" className="mt-[3px] flex w-[96px] items-center gap-1 rounded-r-xl bg-[linear-gradient(#7cc07c_0,#3f9a40_4px,#379738_20px,#2c7c2c_30px)] pl-[10px] shadow-[inset_-3px_-2px_4px_#1f5f20]">
      <WindowsFlag />
      <span className="font-['Liberation_Sans',sans-serif] text-base leading-5 font-bold italic [text-shadow:1px_1px_1px_#1b4a1b]">пуск</span>
    </button>
    <div className="flex w-5 items-center justify-center pt-1">
      <TaskGrip />
    </div>
    <div className="flex min-w-0 flex-1 gap-px pt-[6px] pb-[2px]">
      {tasks.map((task, i) => (
        <button
          key={i}
          type="button"
          className={`flex w-[91px] items-center gap-[3px] rounded-[3px] border pl-2 whitespace-pre ${
            task.active ? "border-[#163f98] bg-[#1e50b8]" : "border-[#2f6de0] border-t-[#6aa4fa] border-l-[#5a98f8] bg-[#3b80f2]"
          }`}
        >
          {task.icon}
          {task.title}
        </button>
      ))}
    </div>
    <div className="flex items-center gap-1 pt-1 pr-2">
      <TaskGrip />
      <span className="bg-[#2f66cc] px-1 leading-4">RL</span>
    </div>
    <div className="flex items-center gap-[2px] border-l border-[#0c4a9c] bg-[linear-gradient(#0c59b9_0,#18bbff_2px,#1290e8_5px,#0f8aea_28px,#0c6ac8_33px)] pt-1 pr-3">
      <button type="button" aria-label="Показать скрытые значки" className="-ml-2">
        <Pic w={17} h={17} smooth>
          <circle cx="8.500" cy="8.500" r="8" fill="#2a88e8" stroke="#a8d4ff" />
          <path d="M10.500 5l-4 3.500 4 3.500" stroke="#fff" strokeWidth="2" />
        </Pic>
      </button>
      <NetworkIcon />
      <NetworkIcon />
      <AgentIcon />
      <VolumeIcon />
      <DownloaderIcon />
      <LetterTrayIcon />
      <PlayTrayIcon />
      <span className="flex h-4 w-4 items-center justify-center rounded-full bg-linear-to-br from-[#1a4a78] to-[#5a98c8] text-sm leading-4 font-bold">a</span>
      <span className="w-4 bg-[#000080] text-center text-xs leading-4">Ru</span>
      <span className="pl-[5px]">18:32</span>
    </div>
  </div>
);

/* ---------- floating desktop gadgets ---------- */

const BalanceClock = () => (
  <svg width="86" height="110" viewBox="0 0 86 110" className="absolute right-0 bottom-[50px] z-20" role="img" aria-label="МегаФон баланс">
    <path d="M19 12A53 53 0 1 0 91 12Q55 44 19 12z" fill="#45288f" stroke="#b4b2b8" strokeWidth="2" />
    <circle cx="55" cy="64" r="34" fill="#50309c" opacity=".5" />
    <circle cx="86" cy="38" r="10" fill="#6a4cb4" opacity=".4" />
    <circle cx="22" cy="78" r="6" fill="#8a70c8" opacity=".5" />
    <circle cx="17" cy="82" r="3" fill="#a894d8" opacity=".6" />
    <path d="M23 14Q55 -13 87 14Q55 39 23 14z" fill="#10dc40" />
    <path d="M30 10Q55 -6 80 10z" fill="#50f478" opacity=".6" />
    <text x="55" y="14" textAnchor="middle" className="fill-[#0a6a28] font-['Open_Sans',sans-serif] text-[10px] font-bold">МегаФон</text>
    <text x="55" y="22" textAnchor="middle" className="fill-[#0a6a28] font-['Liberation_Sans',sans-serif] text-[7px] font-bold">БАЛАНС</text>
    <text x="55" y="38" textAnchor="middle" className="fill-[#18c848] font-['Liberation_Sans',sans-serif] text-[9px] font-bold">12</text>
    <text x="14" y="66" textAnchor="middle" className="fill-[#18c848] font-['Liberation_Sans',sans-serif] text-[9px] font-bold">9</text>
    <path d="M55 40v5M43 41l3 4M67 41l-3 4M28 47l5 3M80 47l-5 3M18 63h4M28 80l5-3M80 80l-5-3" stroke="#8a78c0" />
    <path d="M56 61L51 90" stroke="#fff" strokeWidth="3" />
  </svg>
);

const SpeedMeter = () => (
  <div className="absolute right-[9px] bottom-[29px] z-30 flex h-[48px] w-[57px] flex-col border-2 border-[#b8b8c0] border-t-white border-l-white bg-[#e8eef8]/85 p-[2px]">
    <div className="flex flex-1">
      <div className="relative flex-1 bg-[#cfe6f8]/80">
        <span className="block text-[10px] leading-3 whitespace-nowrap text-[#1a6ac8]">25 KB/s</span>
        <span className="absolute top-[13px] left-[14px] opacity-70">
          <DownloaderIcon />
        </span>
      </div>
      <div className="flex w-[13px] flex-col gap-1">
        <span className="flex h-[15px] items-center justify-center bg-[#b8ccf0]">
          <Pic w={11} h={13} smooth>
            <path d="M3.500 1.500h4v5h2.500L5.500 11 1 6.500h2.500z" fill="#8ac870" stroke="#3a6a3a" />
          </Pic>
        </span>
        <span className="flex h-[15px] items-center justify-center bg-[#b0c8ea]">
          <Pic w={9} h={10} smooth>
            <path d="M1 0l8 5-8 5z" fill="#5a78a0" />
          </Pic>
        </span>
      </div>
    </div>
    <div className="mt-[2px] h-[4px] w-7 bg-[#8aaad0]" />
  </div>
);

export default function App() {
  return (
    <div className="relative flex h-screen flex-col overflow-hidden bg-[#ece9d8] font-['DejaVu_Sans_Condensed',Tahoma,sans-serif] text-[11px] text-black">
      <TitleBar />
      <MenuBar />
      <FormatBar />
      <StandardBar />
      <FormulaBar />
      <main className="flex min-h-0 flex-1 border-t-2 border-l-2 border-[#8a8878]">
        <Worksheet />
        <VerticalScroll />
      </main>
      <SheetTabs />
      <DrawingBar />
      <StatusBar />
      <Taskbar />
      <BalanceClock />
      <SpeedMeter />
    </div>
  );
}
